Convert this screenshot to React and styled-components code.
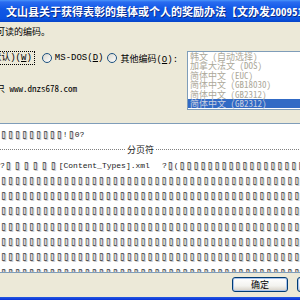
import React from 'react';
import styled, { createGlobalStyle } from 'styled-components';

const GlobalStyle = createGlobalStyle`
  html, body {
    margin: 0;
    padding: 0;
    background: #ECE9D8;
  }
  body {
    font-family: "Noto Sans Mono CJK SC", "Noto Sans CJK SC", "Liberation Mono", monospace;
  }
`;

const Window = styled.div`
  width: 300px;
  height: 300px;
  overflow: hidden;
  display: flex;
  flex-direction: column;
  background: #ECE9D8;
`;

const TitleBar = styled.div`
  height: 22px;
  flex-shrink: 0;
  display: flex;
  align-items: center;
  padding-left: 6px;
  white-space: nowrap;
  overflow: hidden;
  color: #fff;
  font-size: 11px;
  font-weight: bold;
  text-shadow: 1px 1px 0 #0a2a88;
  background: linear-gradient(#4a95fa 0, #2a6cf0 2px, #1158e6 40%, #0a52e0 85%, #0644c8 100%);
`;

const Body = styled.div`
  font-size: 9px;
  color: #000;
  white-space: nowrap;
`;

const Intro = styled.div`
  margin: 2px 0 0 -49px;
  height: 16px;
  line-height: 16px;
`;

const EncodingArea = styled.div`
  display: flex;
  margin-top: 11px;
  height: 59px;
`;

const LeftCol = styled.div`
  width: 187px;
  flex-shrink: 0;
  display: flex;
  flex-direction: column;
`;

const OptionsRow = styled.div`
  display: flex;
  align-items: center;
  height: 14px;
  font-family: "Liberation Mono", "Noto Sans CJK SC", monospace;
`;

const FocusLabel = styled.span`
  margin-left: -54px;
  padding: 0 2px;
  height: 12px;
  line-height: 12px;
  border: 1px dotted #000;
`;

const Radio = styled.span`
  display: inline-block;
  width: 10px;
  height: 10px;
  box-sizing: border-box;
  border-radius: 50%;
  border: 1px solid #1c5180;
  background: linear-gradient(135deg, #d8d6cc, #ffffff);
  margin: 0 3px 0 ${(p) => p.$gap}px;
  flex-shrink: 0;
`;

const UrlRow = styled.div`
  margin: 17px 0 0 -4px;
  height: 14px;
  line-height: 14px;
`;

const ListBox = styled.div`
  flex: 1;
  margin-right: -40px;
  border: 1px solid #7f9db9;
  background: #fff;
  overflow: hidden;
`;

const ListItem = styled.div`
  height: 9.4px;
  line-height: 9.4px;
  padding-left: 2px;
  color: ${(p) => (p.$selected ? '#c9cfe0' : '#aca899')};
  background: ${(p) => (p.$selected ? '#316ac5' : 'transparent')};
`;

const Preview = styled.div`
  margin: 13px -4px 0;
  height: 150px;
  box-sizing: border-box;
  border: 1px solid #7f9db9;
  background: #fff;
  padding: 3px 0 0 3px;
  overflow: hidden;
  color: #3a3a3a;
`;

const PreviewRow = styled.div`
  height: 15.3px;
  line-height: 15.3px;
  white-space: nowrap;
  display: flex;
  align-items: center;
`;

const Tofu = styled.span`
  font-family: "DejaVu Sans Mono", "DejaVu Sans", monospace;
  font-size: 11.6px;
  letter-spacing: ${(p) => p.$spread || 0}px;
  color: #333;
  text-shadow: 1px 1px 0 #c4c4c4;
`;

const Latin = styled.span`
  font-family: "Liberation Mono", monospace;
  font-size: 8px;
  color: #222;
  margin-left: ${(p) => p.$gap || 0}px;
`;

const Dotted = styled.span`
  flex: ${(p) => (p.$width ? `0 0 ${p.$width}px` : '1')};
  border-top: 1px dotted #808080;
`;

const BreakLabel = styled.span`
  font-size: 9px;
  color: #222;
  margin: 0 2px;
`;

const ButtonRow = styled.div`
  height: 24px;
  box-sizing: border-box;
  display: flex;
  gap: 9px;
  padding: 4px 0 0 232px;
`;

const Button = styled.div`
  width: 56px;
  height: 15px;
  flex-shrink: 0;
  box-sizing: border-box;
  border: 1px solid #003c74;
  border-radius: 3px;
  background: linear-gradient(#ffffff, #f3f3ef 60%, #d6d0c5);
  box-shadow: inset 0 0 0 1px #a9c3ec;
  display: flex;
  align-items: center;
  justify-content: center;
  font-size: 9px;
  color: #000;
`;

const Frame = styled.div`
  height: 3px;
  background: linear-gradient(#2459e0, #0831d9);
`;

const encodings = [
  '韩文 (自动选择)',
  '加拿大法文 (DOS)',
  '简体中文 (EUC)',
  '简体中文 (GB18030)',
  '简体中文 (GB2312)',
  '简体中文 (GB2312)',
];

const box = (n) => '▯'.repeat(n);

export default function App() {
  return (
    <Window>
      <GlobalStyle />
      <TitleBar>文山县关于获得表彰的集体或个人的奖励办法【文办发2009516号】.doc</TitleBar>
      <Body>
        <Intro>选择使文档可读的编码。</Intro>
        <EncodingArea>
          <LeftCol>
            <OptionsRow>
              <FocusLabel>Windows(默认)(<u>W</u>)</FocusLabel>
              <Radio $gap={7} />
              <span>MS-DOS(<u>D</u>)</span>
              <Radio $gap={4} />
              <span>其他编码(<u>O</u>):</span>
            </OptionsRow>
            <UrlRow>只 www.dnzs678.com</UrlRow>
          </LeftCol>
          <ListBox>
            {encodings.map((e, i) => (
              <ListItem key={i} $selected={i === encodings.length - 1}>{e}</ListItem>
            ))}
          </ListBox>
        </EncodingArea>
        <Preview>
          <PreviewRow>
            <Tofu>{box(9)}</Tofu><Latin>!</Latin><Tofu>{box(1)}</Tofu><Latin>0?</Latin>
          </PreviewRow>
          <PreviewRow>
            <Dotted $width={125} />
            <BreakLabel>分页符</BreakLabel>
            <Dotted />
          </PreviewRow>
          <PreviewRow>
            <Latin>?</Latin><Tofu $spread={2}>{box(6)}</Tofu><Latin>[Content_Types].xml</Latin>
            <Latin $gap={12}>?</Latin><Tofu>{box(1)}</Tofu><Latin> (</Latin><Tofu>{box(20)}</Tofu>
          </PreviewRow>
          {Array.from({ length: 7 }).map((_, i) => (
            <PreviewRow key={i}>
              <Tofu>{box(44)}</Tofu>
            </PreviewRow>
          ))}
        </Preview>
        <ButtonRow>
          <Button>确定</Button>
          <Button>取消</Button>
        </ButtonRow>
      </Body>
      <Frame />
    </Window>
  );
}
